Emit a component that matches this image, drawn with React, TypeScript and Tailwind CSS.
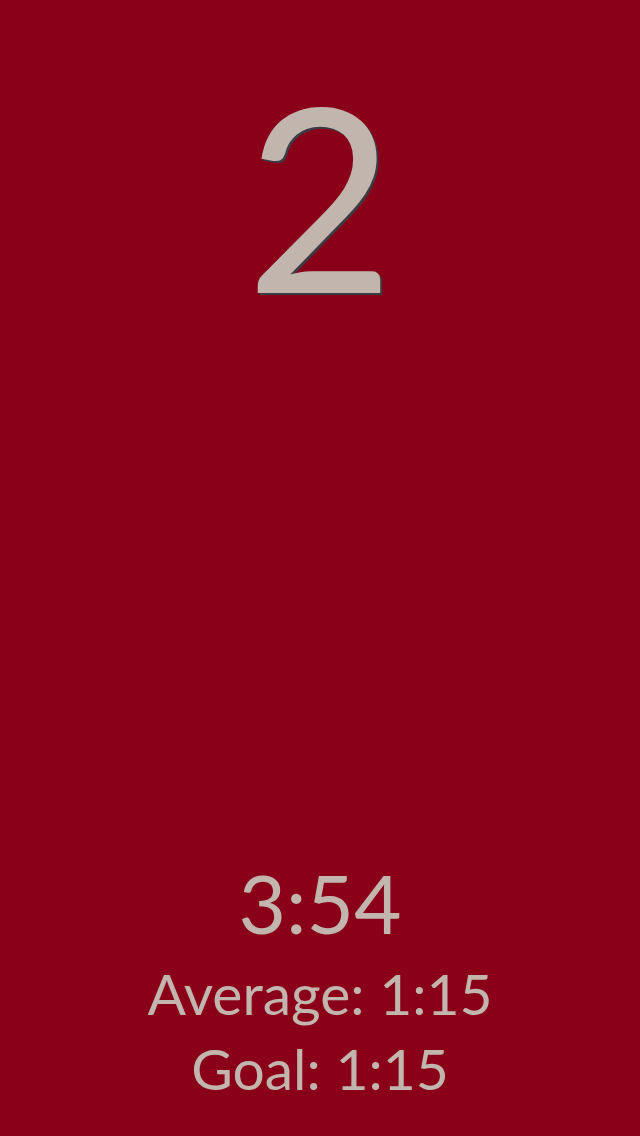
import React from 'react';

const Stat = ({ label, value }: { label: string; value: string }) => (
  <p className="text-[57px] leading-[75px]">
    {label}: {value}
  </p>
);

const App: React.FC = () => {
  return (
    <div
      className="flex h-[1136px] w-[640px] flex-col items-center justify-between overflow-hidden bg-[#8a0019] text-[#c1b5ae]"
      style={{ fontFamily: 'Lato, "DejaVu Sans", sans-serif' }}
    >
      <div className="pt-[66px] text-[256px] leading-[256px] [text-shadow:2px_2px_0_#3b3c44]">2</div>

      <div className="flex flex-col items-center pb-[30px] text-center">
        <p className="mb-[9px] text-[82px] leading-[90px]">3:54</p>
        <Stat label="Average" value="1:15" />
        <Stat label="Goal" value="1:15" />
      </div>
    </div>
  );
};

export default App;
